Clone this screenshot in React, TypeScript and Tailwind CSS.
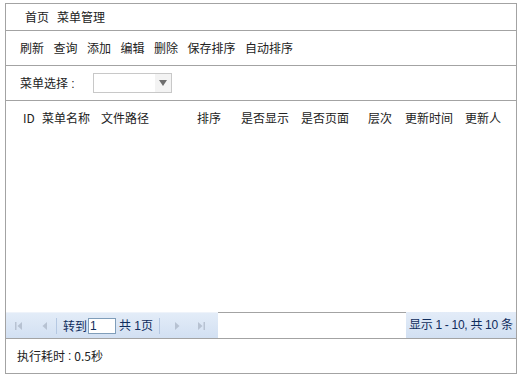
const font = { fontFamily: '"Noto Sans CJK SC", "Liberation Sans", sans-serif' };
const latin = { fontFamily: '"Liberation Sans", "Noto Sans CJK SC", sans-serif' };

const tools = ['刷新', '查询', '添加', '编辑', '删除', '保存排序', '自动排序'];

// grid header columns: [label, width]
const columns: [string, string][] = [
  ['ID', 'w-[19px]'],
  ['菜单名称', 'w-[59px]'],
  ['文件路径', 'w-[96px]'],
  ['排序', 'w-[44px]'],
  ['是否显示', 'w-[60px]'],
  ['是否页面', 'w-[67px]'],
  ['层次', 'w-[37px]'],
  ['更新时间', 'w-[60px]'],
  ['更新人', 'w-auto'],
];

function PagerIcon({ kind }: { kind: 'first' | 'prev' | 'next' | 'last' }) {
  return (
    <svg width="10" height="10" viewBox="0 0 10 10" className="text-[#b7c2d2]">
      {kind === 'first' && (
        <>
          <rect x="1" y="1" width="1.5" height="8" fill="currentColor" />
          <path d="M8 1 L3.5 5 L8 9 Z" fill="currentColor" />
        </>
      )}
      {kind === 'prev' && <path d="M7 1 L2.5 5 L7 9 Z" fill="currentColor" />}
      {kind === 'next' && <path d="M3 1 L7.5 5 L3 9 Z" fill="currentColor" />}
      {kind === 'last' && (
        <>
          <path d="M2 1 L6.5 5 L2 9 Z" fill="currentColor" />
          <rect x="7.5" y="1" width="1.5" height="8" fill="currentColor" />
        </>
      )}
    </svg>
  );
}

export default function App() {
  return (
    <div className="w-[521px] h-[378px] bg-white pt-[3px] pl-[5px] text-[12px] text-[#222]" style={font}>
      <div className="w-[512px] h-[371px] border border-[#a3a3a3] flex flex-col">
        {/* breadcrumb */}
        <div className="h-[27px] shrink-0 border-b border-[#a3a3a3] flex items-center pl-[19px] gap-[8px]">
          <span>首页</span>
          <span>菜单管理</span>
        </div>

        {/* toolbar */}
        <div className="h-[35px] shrink-0 border-b border-[#a3a3a3] flex items-center pl-[14px] gap-[9.5px]">
          {tools.map((t) => (
            <span key={t}>{t}</span>
          ))}
        </div>

        {/* filter */}
        <div className="h-[35px] shrink-0 border-b border-[#a3a3a3] flex items-center pl-[14px]">
          <span className="w-[73px] whitespace-nowrap">
            菜单选择<span style={latin}> :</span>
          </span>
          <div className="w-[79px] h-[20px] border border-[#c8c8c8] flex justify-end items-center">
            <div className="w-[16px] h-[18px] bg-[#f3f3f3] flex items-center justify-center">
              <svg width="8" height="6" viewBox="0 0 8 6">
                <path d="M0 0 L8 0 L4 6 Z" fill="#6d6d6d" />
              </svg>
            </div>
          </div>
        </div>

        {/* grid */}
        <div className="h-[211px] shrink-0 pt-[8px] pl-[17px]">
          <div className="flex">
            {columns.map(([label, w]) => (
              <span key={label} className={`${w} shrink-0`}>
                {label}
              </span>
            ))}
          </div>
        </div>

        {/* pager */}
        <div className="h-[27px] shrink-0 border-b border-[#a3a3a3] flex">
          <div className="w-[212px] h-[26px] bg-gradient-to-b from-[#e3ecf8] to-[#d2e0f2] border-t border-[#eef3fa] flex items-center pl-[8px] text-[#0f2c5c]">
            <span className="w-[26px] flex"><PagerIcon kind="first" /></span>
            <span className="w-[16px] flex"><PagerIcon kind="prev" /></span>
            <span className="w-[1px] h-[16px] bg-[#b5c8e2] mr-[6px]" />
            <span>转到</span>
            <span className="w-[28px] h-[16px] border border-[#7f9db9] bg-white text-[12px] leading-[14px] pl-[1px] ml-[1px] mr-[3px]" style={latin}>1</span>
            <span className="whitespace-nowrap" style={latin}>共 1页</span>
            <span className="w-[1px] h-[16px] bg-[#b5c8e2] ml-[6px] mr-[12px]" />
            <span className="w-[24px] flex"><PagerIcon kind="next" /></span>
            <span className="flex"><PagerIcon kind="last" /></span>
          </div>
          <div className="flex-1 border-t border-[#a3a3a3]" />
          <div
            className="w-[110px] h-[26px] bg-gradient-to-b from-[#e3ecf8] to-[#d2e0f2] flex items-center pl-[3px] text-[#0f2c5c] whitespace-nowrap tracking-[-0.3px]"
            style={latin}
          >
            显示 1 - 10<span className="mr-[3px]">,</span>共 10 条
          </div>
        </div>

        {/* footer */}
        <div className="flex-1 flex items-center pl-[11px] whitespace-nowrap">
          执行耗时<span className="mx-[3px]" style={latin}>:</span>0.5秒
        </div>
      </div>
    </div>
  );
}
